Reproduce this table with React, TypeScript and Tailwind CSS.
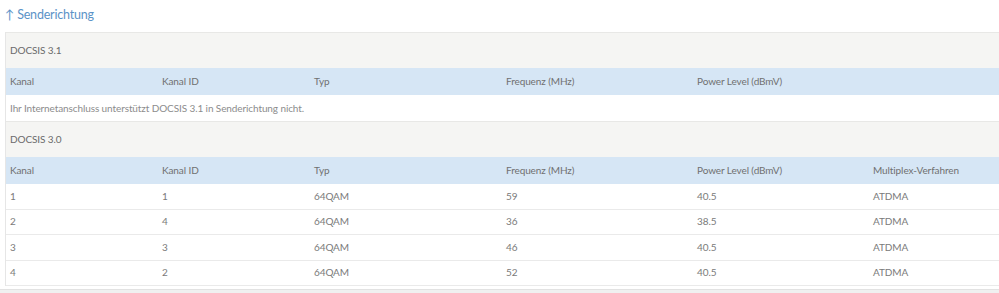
const cols = "grid grid-cols-[152px_152px_192px_191px_176px_1fr]";

const rows = [
  ["1", "1", "64QAM", "59", "40.5", "ATDMA"],
  ["2", "4", "64QAM", "36", "38.5", "ATDMA"],
  ["3", "3", "64QAM", "46", "40.5", "ATDMA"],
  ["4", "2", "64QAM", "52", "40.5", "ATDMA"],
];

function HeadRow({ multiplex }: { multiplex?: boolean }) {
  const labels = ["Kanal", "Kanal ID", "Typ", "Frequenz (MHz)", "Power Level (dBmV)", multiplex ? "Multiplex-Verfahren" : ""];
  return (
    <div className={`${cols} h-[27px] items-center bg-[#d6e6f5] text-[#707070]`}>
      {labels.map((l, i) => (
        <div key={i} className="px-[4px]">{l}</div>
      ))}
    </div>
  );
}

function GroupTitle({ children }: { children: React.ReactNode }) {
  return (
    <div className="h-[36px] flex items-center px-[4px] bg-[#f5f5f3] border-t border-[#e8e8e6] text-[#6a6a6a]">
      {children}
    </div>
  );
}

export default function App() {
  return (
    <div className="w-[999px] h-[293px] overflow-hidden bg-white font-['Lato',sans-serif] text-[10px] tracking-[-0.1px]">
      <h2 className="pl-[5px] pt-[7px] h-[32px] text-[12.5px] leading-[16px] tracking-[-0.2px] text-[#5b93c7]">↑ Senderichtung</h2>
      <div className="ml-[5px] w-[1010px] border-l border-[#e6e6e6]">
        <GroupTitle>DOCSIS 3.1</GroupTitle>
        <HeadRow />
        <div className="h-[26px] flex items-center px-[4px] text-[#8c8c8c]">
          Ihr Internetanschluss unterstützt DOCSIS 3.1 in Senderichtung nicht.
        </div>
        <GroupTitle>DOCSIS 3.0</GroupTitle>
        <HeadRow multiplex />
        {rows.map((r, i) => (
          <div key={i} className={`${cols} h-[25.5px] items-center text-[#7a7a7a] border-b border-[#eaeaea]`}>
            {r.map((c, j) => (
              <div key={j} className="px-[4px]">{c}</div>
            ))}
          </div>
        ))}
      </div>
      <div className="mt-[3px] h-[10px] bg-[#f0f0f0] border-t border-[#e2e2e2]" />
    </div>
  );
}
